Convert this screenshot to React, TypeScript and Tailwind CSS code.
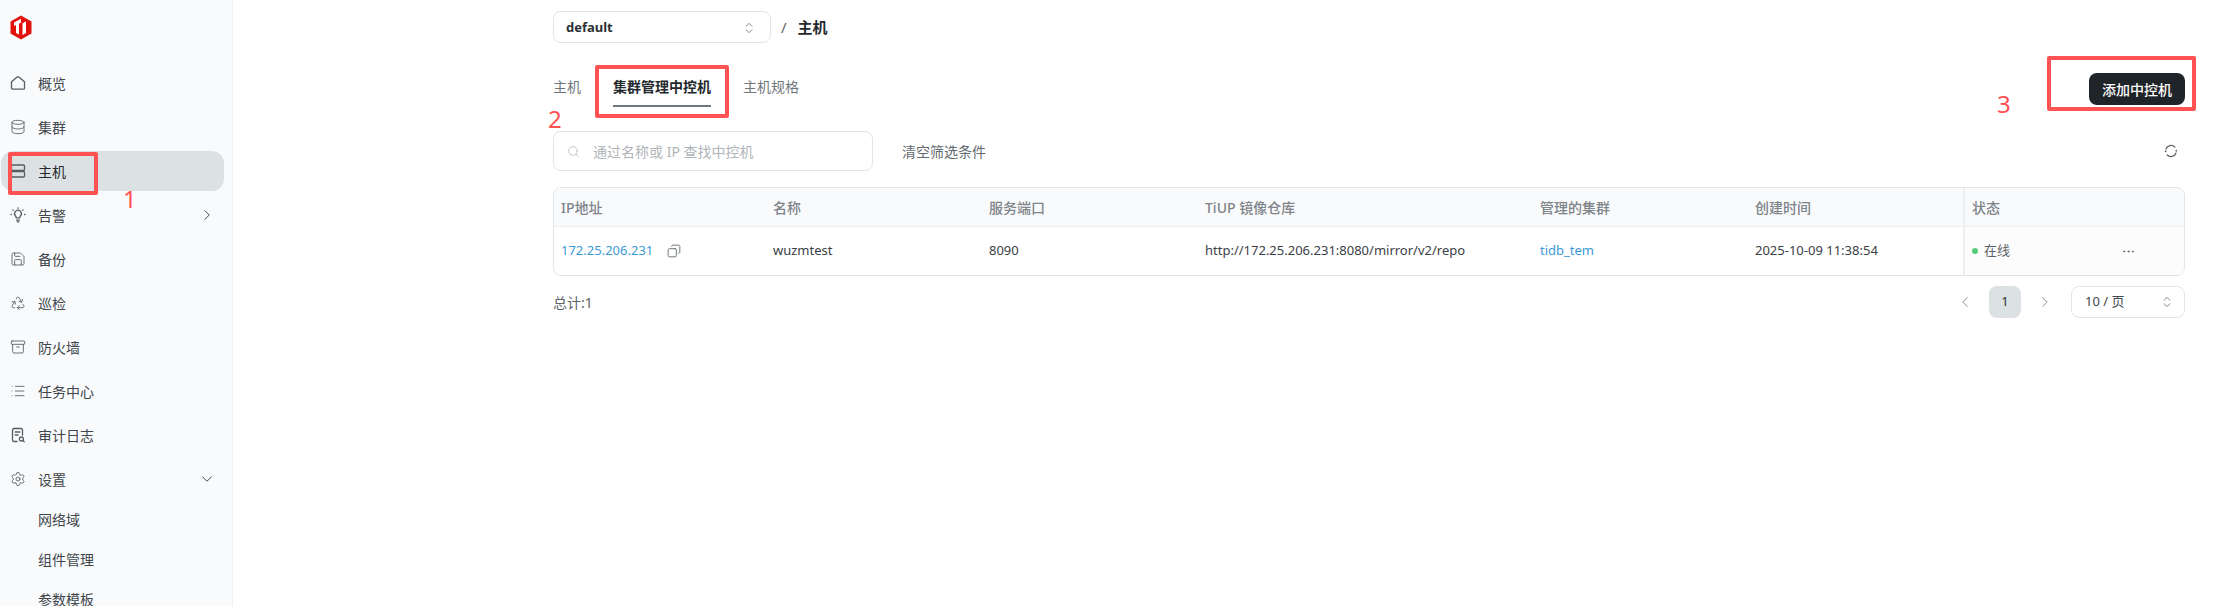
import React from "react";
import { Database, Save, Recycle, Archive, List, Settings, ChevronRight, ChevronDown, ChevronLeft, ChevronsUpDown, Search, Copy, Ellipsis } from "lucide-react";

const FONT = '"Noto Sans", "Noto Sans CJK SC", sans-serif';

function Logo() {
  return (
    <svg width="22" height="25" viewBox="0 0 22 25" className="block">
      <path d="M11 0.5 L21.5 6.5 V18.5 L11 24.5 L0.5 18.5 V6.5 Z" fill="#e1110c" />
      <path d="M4 7.5 L11 3.8 V7.6 L9 8.7 V19.6 L6 18 V10 L4 11 Z" fill="#ffffff" />
      <path d="M12.5 8.2 L16 6.2 V18 L12.5 20 Z" fill="#ffffff" />
    </svg>
  );
}

const svgProps = {
  width: 16,
  height: 16,
  viewBox: "0 0 16 16",
  fill: "none",
  stroke: "currentColor",
  strokeWidth: 1.3,
  strokeLinecap: "round" as const,
  strokeLinejoin: "round" as const,
};

function HomeIcon() {
  return (
    <svg {...svgProps}>
      <path d="M1.5 6.8 L7.2 2 a1.2 1.2 0 0 1 1.6 0 L14.5 6.8 V13 a1.2 1.2 0 0 1 -1.2 1.2 H2.7 A1.2 1.2 0 0 1 1.5 13 Z" />
    </svg>
  );
}

function ServerIcon() {
  return (
    <svg {...svgProps}>
      <rect x="1.5" y="2" width="13" height="5.5" rx="1" />
      <rect x="1.5" y="8.5" width="13" height="5.5" rx="1" />
    </svg>
  );
}

function BulbIcon() {
  return (
    <svg {...svgProps}>
      <path d="M5.2 8.6 a3.4 3.4 0 1 1 5.6 0 c-.6 .8 -1 1.3 -1 2.2 H6.2 c0 -.9 -.4 -1.4 -1 -2.2 Z" />
      <path d="M6.6 13.2 H9.4 M7.2 14.8 H8.8" />
      <path d="M8 1 V1.3 M2.9 2.9 L3.2 3.2 M13.1 2.9 L12.8 3.2 M1 7.5 H1.4 M14.6 7.5 H15" />
    </svg>
  );
}

function AuditIcon() {
  return (
    <svg {...svgProps}>
      <path d="M7 14.5 H4 a1.5 1.5 0 0 1 -1.5 -1.5 V3 A1.5 1.5 0 0 1 4 1.5 H11 A1.5 1.5 0 0 1 12.5 3 V8" />
      <path d="M5.2 5 H9.8 M5.2 8 H8" />
      <circle cx="11.4" cy="12" r="2" />
      <path d="M13 13.6 L14.2 14.8" />
    </svg>
  );
}

function RefreshIcon() {
  return (
    <svg width="14" height="14" viewBox="0 0 14 14" fill="none" stroke="currentColor" strokeWidth="1.3" strokeLinecap="round" className="mr-[7px] text-[#5d6469]">
      <path d="M2 5 A5.3 5.3 0 0 1 10.8 3" />
      <path d="M12 9 A5.3 5.3 0 0 1 3.2 11" />
      <path d="M12.3 6.6 V6.9 M1.7 7.1 V7.4" strokeWidth="1.6" />
    </svg>
  );
}

const icon = "text-[#555c61]";

function NavItem({
  label,
  ic,
  active,
  trailing,
}: {
  label: string;
  ic: React.ReactNode;
  active?: boolean;
  trailing?: React.ReactNode;
}) {
  return (
    <div
      className={
        "flex h-10 w-[223px] items-center rounded-xl pl-[9px] pr-[8px] text-[14px] text-[#3f474c] " +
        (active ? "bg-[#dce2e3] text-[#23292d]" : "")
      }
    >
      <span className={"flex w-4 shrink-0 justify-center " + icon}>{ic}</span>
      <span className="ml-[12px] flex-1">{label}</span>
      {trailing}
    </div>
  );
}

function SubItem({ label }: { label: string }) {
  return <div className="flex h-10 w-[223px] items-center pl-[37px] text-[14px] text-[#3f474c]">{label}</div>;
}

function Sidebar() {
  return (
    <aside className="h-[606px] w-[233px] shrink-0 overflow-hidden border-r border-[#eff1f3] bg-[#f9fafc] pl-px">
      <div className="flex h-[63px] items-start pl-[9px] pt-[15px]">
        <Logo />
      </div>
      <nav className="flex flex-col gap-1">
        <NavItem label="概览" ic={<HomeIcon />} />
        <NavItem label="集群" ic={<Database size={16} strokeWidth={1.3} />} />
        <NavItem label="主机" ic={<ServerIcon />} active />
        <NavItem
          label="告警"
          ic={<BulbIcon />}
          trailing={<ChevronRight size={18} strokeWidth={1.3} className="text-[#3f474c]" />}
        />
        <NavItem label="备份" ic={<Save size={16} strokeWidth={1.3} />} />
        <NavItem label="巡检" ic={<Recycle size={16} strokeWidth={1.3} />} />
        <NavItem label="防火墙" ic={<Archive size={16} strokeWidth={1.3} />} />
        <NavItem label="任务中心" ic={<List size={16} strokeWidth={1.3} />} />
        <NavItem label="审计日志" ic={<AuditIcon />} />
        <div className="flex flex-col">
          <NavItem
            label="设置"
            ic={<Settings size={16} strokeWidth={1.3} />}
            trailing={<ChevronDown size={18} strokeWidth={1.3} className="text-[#3f474c]" />}
          />
          <SubItem label="网络域" />
          <SubItem label="组件管理" />
          <SubItem label="参数模板" />
        </div>
      </nav>
    </aside>
  );
}

const headCell = "flex items-center pl-[7px] text-[14px] font-medium text-[#7d848a]";
const bodyCell = "flex items-center pl-[7px] text-[13px] text-[#3a4146]";

function Table() {
  return (
    <div className="mt-4 overflow-hidden rounded-lg border border-[#e2e5e8]">
      <div className="grid h-[39px] grid-cols-[212px_216px_216px_335px_215px_215px_1fr] border-b border-[#eceef0] bg-[#f9fafb]">
        <div className={headCell}>IP地址</div>
        <div className={headCell}>名称</div>
        <div className={headCell}>服务端口</div>
        <div className={headCell}>TiUP 镜像仓库</div>
        <div className={headCell}>管理的集群</div>
        <div className={headCell}>创建时间</div>
        <div className={headCell + " border-l-2 border-[#eceef0]"}>状态</div>
      </div>
      <div className="grid h-[48px] grid-cols-[212px_216px_216px_335px_215px_215px_1fr]">
        <div className={bodyCell}>
          <span className="text-[#3b9ad6]">172.25.206.231</span>
          <Copy size={14} strokeWidth={1.4} className="ml-[14px] -scale-x-100 text-[#555c61]" />
        </div>
        <div className={bodyCell}>wuzmtest</div>
        <div className={bodyCell}>8090</div>
        <div className={bodyCell}>http://172.25.206.231:8080/mirror/v2/repo</div>
        <div className={bodyCell + " text-[#3b9ad6]"}>tidb_tem</div>
        <div className={bodyCell}>2025-10-09 11:38:54</div>
        <div className="flex items-center border-l-2 border-[#eceef0] bg-[#fcfcfd] pl-[7px] pr-[48px] text-[13px] text-[#5d6469]">
          <span className="h-[6px] w-[6px] rounded-full bg-[#56cc7b]" />
          <span className="ml-[6px] flex-1">在线</span>
          <Ellipsis size={15} strokeWidth={1.4} className="text-[#5d6469]" />
        </div>
      </div>
    </div>
  );
}

function Main() {
  return (
    <main className="min-w-0 flex-1 pl-[320px] pr-[47px] pt-[11px]">
      <div className="flex h-8 items-center">
        <div className="flex h-8 w-[218px] items-center justify-between rounded-lg border border-[#e2e5e8] pl-3 pr-[14px] pt-px text-[13px] font-bold text-[#2a3034]">
          <span>default</span>
          <ChevronsUpDown size={14} strokeWidth={1.3} className="text-[#5d6469]" />
        </div>
        <span className="ml-[10px] text-[15px] text-[#5d6469]">/</span>
        <span className="ml-[11px] text-[15px] font-bold text-[#23292d]">主机</span>
      </div>

      <div className="mt-[30px] flex items-start justify-between">
        <div className="flex gap-8 text-[14px] text-[#70777c]">
          <div className="h-[34px] leading-[28px]">主机</div>
          <div className="h-[34px] border-b-2 border-[#70777c] font-bold leading-[28px] text-[#23292d]">
            集群管理中控机
          </div>
          <div className="h-[34px] leading-[28px]">主机规格</div>
        </div>
        <div className="flex h-8 w-[96px] items-center justify-center rounded-lg bg-[#1f2428] text-[14px] font-medium text-white">
          添加中控机
        </div>
      </div>

      <div className="mt-6 flex h-10 items-center">
        <div className="flex h-10 w-[320px] items-center rounded-lg border border-[#e2e5e8] pl-[13px] text-[14px] text-[#b0b5b9]">
          <Search size={13} strokeWidth={1.4} className="text-[#b0b5b9]" />
          <span className="ml-[13px]">通过名称或 IP 查找中控机</span>
        </div>
        <span className="ml-[29px] flex-1 text-[14px] text-[#62696e]">清空筛选条件</span>
        <RefreshIcon />
      </div>

      <Table />

      <div className="mt-[10px] flex h-8 items-center">
        <span className="flex-1 text-[14px] text-[#5d6469]">总计:1</span>
        <ChevronLeft size={18} strokeWidth={1.3} className="text-[#8a9095]" />
        <div className="ml-[15px] flex h-8 w-8 items-center justify-center rounded-lg bg-[#dce2e3] text-[13px] text-[#2a3034]">
          1
        </div>
        <ChevronRight size={18} strokeWidth={1.3} className="ml-[15px] text-[#8a9095]" />
        <div className="ml-[17px] flex h-8 w-[114px] items-center justify-between rounded-lg border border-[#e2e5e8] pl-[13px] pr-[10px] text-[13px] text-[#3f474c]">
          <span>10 / 页</span>
          <ChevronsUpDown size={14} strokeWidth={1.3} className="text-[#5d6469]" />
        </div>
      </div>
    </main>
  );
}

export default function App() {
  return (
    <div className="relative flex h-[606px] overflow-hidden bg-white" style={{ fontFamily: FONT }}>
      <Sidebar />
      <Main />
      {/* red annotations drawn on top of the screenshot */}
      <div className="absolute left-[8px] top-[152px] h-[43px] w-[90px] rounded-[2px] border-4 border-[#ff5252]" />
      <div className="absolute left-[595px] top-[65px] h-[53px] w-[134px] rounded-[2px] border-4 border-[#ff5252]" />
      <div className="absolute left-[2047px] top-[56px] h-[55px] w-[149px] rounded-[2px] border-4 border-[#ff5252]" />
      <span className="absolute left-[123px] top-[183px] text-[24px] leading-[32px] text-[#ff5252]">1</span>
      <span className="absolute left-[548px] top-[103px] text-[24px] leading-[32px] text-[#ff5252]">2</span>
      <span className="absolute left-[1997px] top-[88px] text-[24px] leading-[32px] text-[#ff5252]">3</span>
    </div>
  );
}
